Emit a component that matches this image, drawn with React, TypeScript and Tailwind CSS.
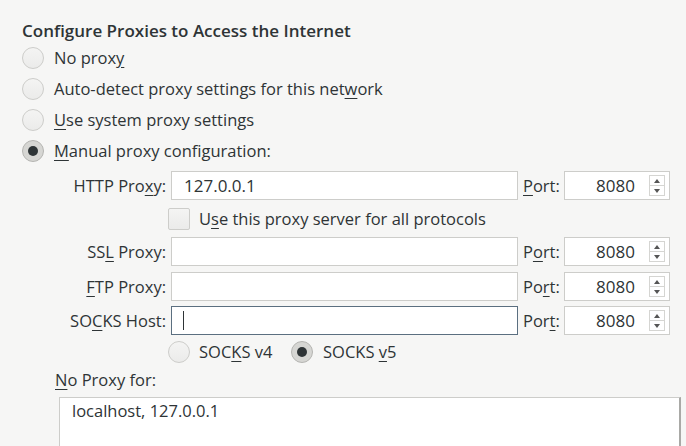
import React from "react";

const font = { fontFamily: '"Open Sans", "Noto Sans", sans-serif' };

function Radio({ checked = false }: { checked?: boolean }) {
  return (
    <div
      className={
        "w-[22px] h-[22px] rounded-full border flex items-center justify-center shrink-0 " +
        (checked
          ? "border-[#b5b5b2] bg-[#d6d6d3]"
          : "border-[#cdcdca] bg-gradient-to-b from-[#f4f4f3] to-[#ebebea]")
      }
    >
      {checked && <div className="w-[10px] h-[10px] rounded-full bg-[#2e3436]" />}
    </div>
  );
}

function U({ children }: { children: React.ReactNode }) {
  return <span className="underline underline-offset-[3px] decoration-1">{children}</span>;
}

function Spin() {
  return (
    <div className="w-[106px] h-[29px] bg-white border border-[#cdcdca] flex items-center">
      <div className="flex-1 text-right pr-[14px] text-[17px]">8080</div>
      <div className="w-[16px] h-[21px] mr-[4px] border border-[#d5d5d2] flex flex-col">
        <div className="flex-1 flex items-center justify-center border-b border-[#d5d5d2]">
          <svg width="6" height="4" viewBox="0 0 6 4"><path d="M3 0 L6 4 L0 4 Z" fill="#555" /></svg>
        </div>
        <div className="flex-1 flex items-center justify-center">
          <svg width="6" height="4" viewBox="0 0 6 4"><path d="M0 0 L6 0 L3 4 Z" fill="#555" /></svg>
        </div>
      </div>
    </div>
  );
}

function Row({
  label,
  value,
  port,
  focused = false,
}: {
  label: React.ReactNode;
  value?: string;
  port: React.ReactNode;
  focused?: boolean;
}) {
  return (
    <div className="flex items-center h-[29px]">
      <div className="w-[111px] text-right whitespace-nowrap">{label}</div>
      <div
        className={
          "ml-[5px] w-[347px] h-[29px] bg-white border flex items-center pl-[12px] text-[17px] " +
          (focused ? "border-[#5b6f80]" : "border-[#cdcdca]")
        }
      >
        {value}
        {focused && <div className="w-px h-[19px] bg-[#2e3436] -ml-[1px]" />}
      </div>
      <div className="ml-[5px] w-[41px]">{port}</div>
      <Spin />
    </div>
  );
}

export default function App() {
  return (
    <div
      className="w-[686px] h-[446px] overflow-hidden bg-[#f6f6f5] text-[#2e3436] text-[16.5px] leading-[22px]"
      style={font}
    >
      <div className="pl-[22px] pt-[20px]">
        <div className="font-semibold h-[22px] text-[17px]">Configure Proxies to Access the Internet</div>
        <div className="flex flex-col">
          <div className="flex items-center h-[31px] gap-[10px]">
            <Radio />
            <span>No prox<U>y</U></span>
          </div>
          <div className="flex items-center h-[31px] gap-[10px]">
            <Radio />
            <span>Auto-detect proxy settings for this net<U>w</U>ork</span>
          </div>
          <div className="flex items-center h-[31px] gap-[10px]">
            <Radio />
            <span><U>U</U>se system proxy settings</span>
          </div>
          <div className="flex items-center h-[31px] gap-[10px]">
            <Radio checked />
            <span><U>M</U>anual proxy configuration:</span>
          </div>
        </div>
      </div>
      <div className="pl-[55px] mt-[5px] flex flex-col">
        <Row label={<>HTTP Pro<U>x</U>y:</>} value="127.0.0.1" port={<><U>P</U>ort:</>} />
        <div className="flex items-center h-[37px] pl-[113px] gap-[9px]">
          <div className="w-[22px] h-[22px] border border-[#cdcdca] bg-gradient-to-b from-[#f4f4f3] to-[#ebebea] rounded-[2px]" />
          <span>U<U>s</U>e this proxy server for all protocols</span>
        </div>
        <Row label={<>SS<U>L</U> Proxy:</>} port={<>P<U>o</U>rt:</>} />
        <div className="h-[6px]" />
        <Row label={<><U>F</U>TP Proxy:</>} port={<>Po<U>r</U>t:</>} />
        <div className="h-[5px]" />
        <Row label={<>SO<U>C</U>KS Host:</>} port={<>Por<U>t</U>:</>} focused />
        <div className="flex items-center h-[34px] pl-[113px]">
          <Radio />
          <span className="ml-[9px] w-[92px]">SOC<U>K</U>S v4</span>
          <Radio checked />
          <span className="ml-[10px]">SOCKS <U>v</U>5</span>
        </div>
        <div className="h-[22px] flex items-center">
          <span><U>N</U>o Proxy for:</span>
        </div>
        <div className="ml-[4px] mt-[6px] w-[622px] h-[80px] bg-white border border-[#cdcdca] border-r-[#a9a9a6] border-r-2 pl-[12px] pt-[2px]">
          localhost, 127.0.0.1
        </div>
      </div>
    </div>
  );
}
